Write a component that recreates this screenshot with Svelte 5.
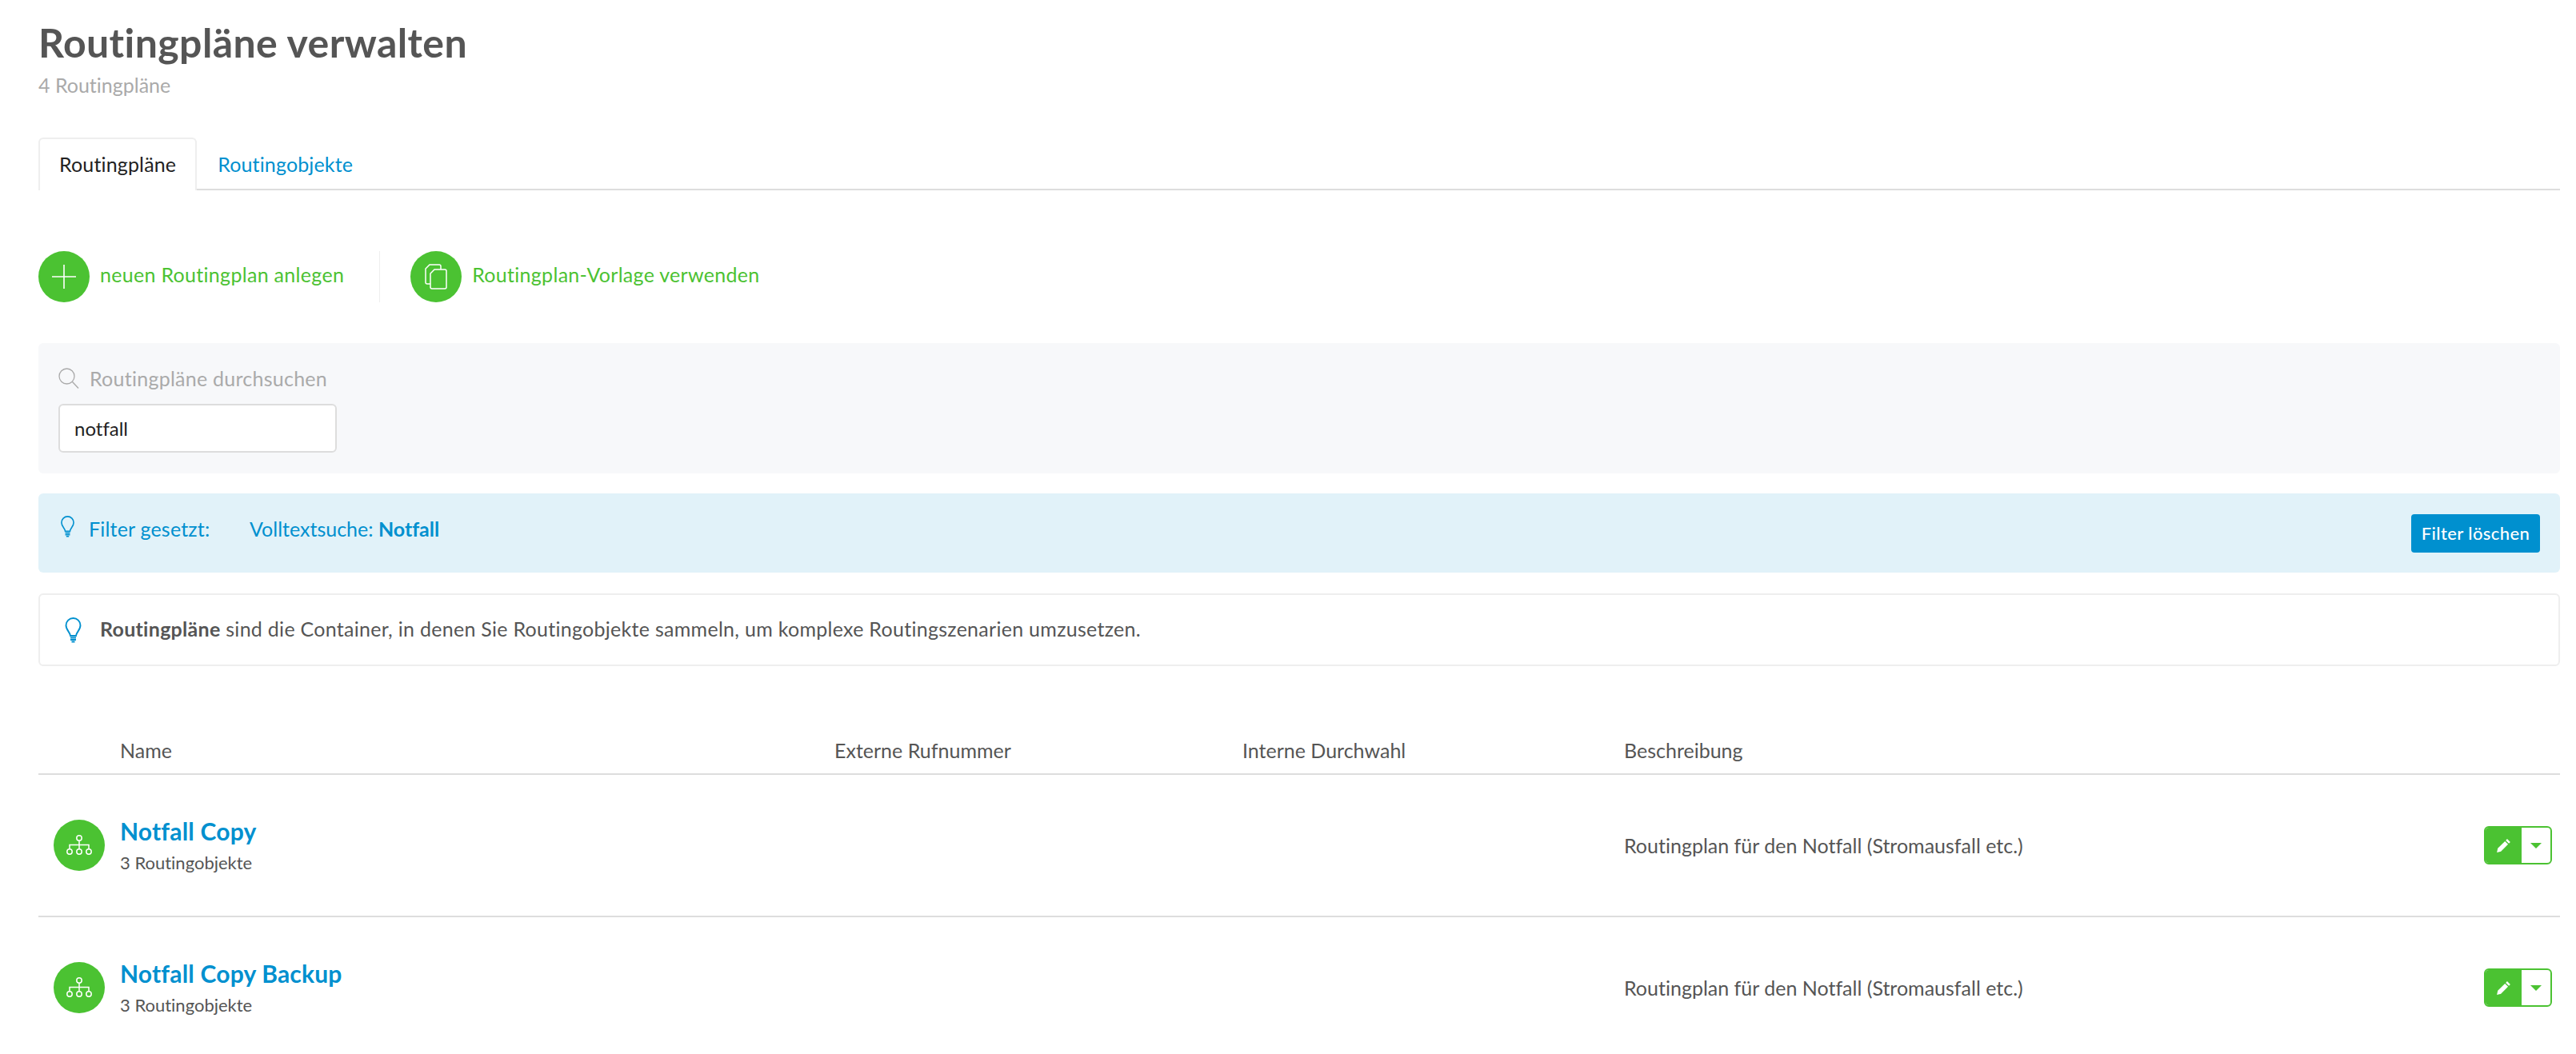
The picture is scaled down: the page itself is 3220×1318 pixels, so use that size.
<script lang="ts">
	const plans = [
		{ name: 'Notfall Copy', count: '3 Routingobjekte', text: 'Routingplan für den Notfall (Stromausfall etc.)' },
		{ name: 'Notfall Copy Backup', count: '3 Routingobjekte', text: 'Routingplan für den Notfall (Stromausfall etc.)' }
	];
</script>

{#snippet bulb(w: number, h: number)}
	<svg class="bulb" width={w} height={h} viewBox="0 0 20 32" fill="none" stroke="currentColor" stroke-width="1.900">
		<path d="M6.500 23c0-4-5.500-7-5.500-13a9 9 0 0 1 18 0c0 6-5.500 9-5.500 13z" />
		<path d="M6.500 25.500h7M6.500 28h7M8 30.500h4" />
	</svg>
{/snippet}

<div class="page">
	<h1>Routingpläne verwalten</h1>
	<p class="count">4 Routingpläne</p>

	<nav class="tabs">
		<span class="tab active">Routingpläne</span>
		<span class="tab">Routingobjekte</span>
	</nav>

	<div class="actions">
		<div class="action">
			<span class="circle">
				<svg width="30" height="30" viewBox="0 0 30 30" stroke="#fff" stroke-width="1.600"><path d="M15 0v30M0 15h30" /></svg>
			</span>
			<span class="action-label">neuen Routingplan anlegen</span>
		</div>
		<div class="action second">
			<span class="circle">
				<svg width="28" height="32" viewBox="0 0 28 32" fill="#4bc232" stroke="#fff" stroke-width="1.500">
					<path d="M6 1h12a2 2 0 0 1 2 2v22H3a2 2 0 0 1-2-2V6z" />
					<path d="M12 7h13a2 2 0 0 1 2 2v20a2 2 0 0 1-2 2H9a2 2 0 0 1-2-2V12z" />
				</svg>
			</span>
			<span class="action-label">Routingplan-Vorlage verwenden</span>
		</div>
	</div>

	<section class="search">
		<label for="search-input">
			<svg width="26" height="26" viewBox="0 0 26 26" fill="none" stroke="#aaa" stroke-width="1.300">
				<circle cx="10.500" cy="10.500" r="9.500" /><path d="M17.500 17.500l7.500 8" />
			</svg>
			<span>Routingpläne durchsuchen</span>
		</label>
		<input id="search-input" type="text" value="notfall" />
	</section>

	<section class="filter">
		<div class="filter-text">
			<span class="filter-icon">{@render bulb(19, 27)}</span>
			<span class="filter-label">Filter gesetzt:</span>
			<span>Volltextsuche: <b>Notfall</b></span>
		</div>
		<button>Filter löschen</button>
	</section>

	<section class="info">
		{@render bulb(23, 32)}
		<p><b>Routingpläne</b> sind die Container, in denen Sie Routingobjekte sammeln, um komplexe Routingszenarien umzusetzen.</p>
	</section>

	<div class="table">
		<div class="row head">
			<span></span>
			<span>Name</span>
			<span>Externe Rufnummer</span>
			<span>Interne Durchwahl</span>
			<span>Beschreibung</span>
			<span></span>
		</div>
		{#each plans as plan}
			<div class="row plan">
				<span class="circle">
					<svg width="32" height="26" viewBox="0 0 32 26" fill="none" stroke="#fff" stroke-width="1.500">
						<circle cx="16" cy="4" r="3.200" />
						<circle cx="4" cy="21" r="3.200" />
						<circle cx="16" cy="21" r="3.200" />
						<circle cx="28" cy="21" r="3.200" />
						<path d="M16 7.200v10.600M4 17.800V12.500h24v5.300" />
					</svg>
				</span>
				<div class="plan-name">
					<a href="#top">{plan.name}</a>
					<small>{plan.count}</small>
				</div>
				<span></span>
				<span></span>
				<span>{plan.text}</span>
				<div class="btns">
					<span class="edit">
						<svg width="19" height="19" viewBox="0 0 17 17" fill="#fff">
							<path d="M12.500 1l3.500 3.500-1.600 1.600-3.500-3.500zM10 3.500L13.500 7l-8 8L1 16l1-4.500z" />
						</svg>
					</span>
					<span class="more"><i></i></span>
				</div>
			</div>
		{/each}
	</div>
</div>

<style>
	:global(body) {
		background: #fff;
	}
	.page {
		box-sizing: border-box;
		height: 1318px;
		overflow: hidden;
		padding: 0 20px 0 48px;
		font-family: Lato, 'Open Sans', sans-serif;
		font-size: 25px;
		font-variant-ligatures: none;
		color: #555;
	}
	h1 {
		margin: 0;
		padding-top: 25px;
		font-size: 50px;
		line-height: 56px;
		letter-spacing: 0.4px;
		font-weight: 700;
		color: #555;
	}
	.count {
		margin: 9px 0 0;
		line-height: 32px;
		color: #aaa;
	}
	.tabs {
		display: flex;
		margin-top: 50px;
		height: 66px;
		border-bottom: 2px solid #ddd;
		box-sizing: border-box;
		letter-spacing: 0.15px;
	}
	.tab {
		padding: 0 26px;
		line-height: 66px;
		color: #0090cf;
	}
	.tab.active {
		height: 66px;
		box-sizing: border-box;
		padding: 0 24px;
		line-height: 62px;
		color: #222;
		background: #fff;
		border: 2px solid #eee;
		border-bottom: none;
		border-radius: 6px 6px 0 0;
	}
	.actions {
		display: flex;
		margin-top: 76px;
		color: #4bc232;
		letter-spacing: 0.3px;
	}
	.action {
		display: flex;
		align-items: center;
		gap: 13px;
		padding-right: 44px;
	}
	.action-label {
		margin-top: -6px;
	}
	.action.second {
		border-left: 1px solid #eee;
		padding-left: 38px;
	}
	.circle {
		flex: none;
		display: flex;
		align-items: center;
		justify-content: center;
		width: 64px;
		height: 64px;
		border-radius: 50%;
		background: #4bc232;
	}
	.search {
		margin-top: 51px;
		height: 163px;
		box-sizing: border-box;
		padding: 28px 25px 0;
		background: #f7f8fa;
		border-radius: 6px;
	}
	label {
		display: flex;
		align-items: center;
		gap: 13px;
		height: 32px;
		color: #aaa;
		letter-spacing: 0.25px;
	}
	input {
		display: block;
		box-sizing: border-box;
		width: 348px;
		height: 61px;
		margin-top: 16px;
		padding: 0 18px;
		border: 2px solid #ddd;
		border-radius: 6px;
		background: #fff;
		font: inherit;
		font-size: 24px;
		color: #222;
	}
	.filter {
		display: flex;
		justify-content: space-between;
		align-items: center;
		margin-top: 25px;
		height: 99px;
		box-sizing: border-box;
		padding: 0 25px 0 27px;
		background: #e1f2f9;
		border-radius: 6px;
		color: #0090cf;
	}
	.filter-text {
		display: flex;
		align-items: center;
		margin-top: -12px;
	}
	.filter-icon {
		display: flex;
		width: 36px;
		margin-top: -4px;
	}
	.filter-label {
		width: 201px;
		letter-spacing: 0.2px;
	}
	button {
		width: 161px;
		height: 48px;
		border: none;
		border-radius: 4px;
		background: #0090cf;
		color: #fff;
		font: 500 22px Lato, 'Open Sans', sans-serif;
		letter-spacing: 0.4px;
	}
	.info {
		display: flex;
		align-items: center;
		gap: 22px;
		margin-top: 26px;
		height: 91px;
		box-sizing: border-box;
		padding: 0 30px;
		border: 2px solid #eee;
		border-radius: 6px;
		letter-spacing: 0.28px;
	}
	.bulb {
		flex: none;
		color: #0090cf;
	}
	.info p {
		margin: -4px 0 0;
	}
	.table {
		margin-top: 75px;
	}
	.row {
		display: grid;
		grid-template-columns: 102px 893px 510px 477px 1fr 85px;
		align-items: center;
		padding-right: 10px;
		border-bottom: 2px solid #ddd;
	}
	.head {
		height: 59px;
	}
	.plan {
		height: 178px;
		box-sizing: border-box;
	}
	.plan .circle {
		margin-left: 19px;
	}
	.plan-name {
		display: flex;
		flex-direction: column;
	}
	.plan-name a {
		font-size: 30px;
		line-height: 36px;
		font-weight: 700;
		letter-spacing: 0.2px;
		color: #0090cf;
		text-decoration: none;
	}
	.plan-name small {
		margin-top: 8px;
		font-size: 22px;
		line-height: 28px;
	}
	.btns {
		display: flex;
		height: 48px;
		box-sizing: border-box;
		border-radius: 6px;
		overflow: hidden;
		border: 2px solid #4bc232;
	}
	.edit {
		flex: 0 0 45px;
		display: flex;
		align-items: center;
		justify-content: center;
		background: #4bc232;
	}
	.more {
		flex: 1;
		display: flex;
		align-items: center;
		justify-content: center;
	}
	.more i {
		border: 7px solid transparent;
		border-top: 7px solid #4bc232;
		border-bottom: none;
	}
</style>
